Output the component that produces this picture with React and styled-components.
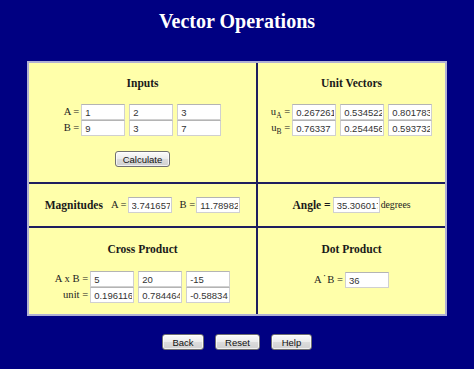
import React from 'react';
import styled, { createGlobalStyle } from 'styled-components';

const Global = createGlobalStyle`
  html, body { margin: 0; padding: 0; background: #000082; }
  body { font-family: "Liberation Serif", "Times New Roman", serif; }
`;

const Page = styled.div`
  width: 474px;
  min-height: 369px;
  padding-top: 10px;
  box-sizing: border-box;
  display: flex;
  flex-direction: column;
  align-items: center;
`;

const Title = styled.h1`
  margin: 0;
  font: bold 20px/22px "Liberation Serif", serif;
  color: #ffffff;
`;

const Board = styled.div`
  margin-top: 29px;
  width: 420px;
  box-sizing: border-box;
  border: 2px solid #b0b0d4;
  background: #1e1e5e;
  display: grid;
  grid-template-columns: 227px 187px;
  grid-template-rows: 119px 42px 86px;
  gap: 2px;
`;

const Section = styled.section`
  background: #ffffaa;
  box-sizing: border-box;
  display: flex;
  flex-direction: column;
  align-items: center;
  padding-top: ${(p) => p.$top || 0}px;
`;

const InlineSection = styled.section`
  background: #ffffaa;
  display: flex;
  align-items: center;
  justify-content: center;
`;

const Heading = styled.h2`
  margin: 0 ${(p) => p.$right || 0}px 0 0;
  font: bold 11.5px/13px "Liberation Serif", serif;
  color: #1a1a1a;
  white-space: nowrap;
`;

const VectorGrid = styled.div`
  margin-top: ${(p) => p.$gap}px;
  display: grid;
  grid-template-columns: auto auto;
  column-gap: 2px;
  align-items: center;
`;

const Label = styled.span`
  justify-self: end;
  font: ${(p) => p.$size || 10.6}px/16px "Liberation Serif", serif;
  color: #222;
  white-space: nowrap;
  margin: 0 ${(p) => p.$right || 0}px 0 ${(p) => p.$left || 0}px;
`;

const Sub = styled.sub`
  font-size: 7.5px;
  vertical-align: -3px;
  line-height: 0;
`;

const Dot = styled.span`
  display: inline-block;
  transform: translateY(-4px);
  margin: 0 1px;
`;

const Fields = styled.div`
  display: flex;
  gap: 4px;
`;

const Field = styled.input`
  width: ${(p) => p.$w || 44}px;
  height: 16px;
  box-sizing: border-box;
  margin: 0 ${(p) => p.$right || 0}px 0 0;
  border: 1px solid #d0d0d0;
  border-top-color: #b4b4b4;
  background: #ffffff;
  padding: 0 1px 0 3px;
  font: 9.5px "Liberation Sans", Arial, sans-serif;
  color: #333;
  outline: none;
`;

const PlainRow = styled.div`
  margin-top: ${(p) => p.$gap}px;
  display: flex;
  align-items: center;
  gap: 2px;
`;

const Button = styled.button`
  width: ${(p) => p.$w}px;
  height: 16px;
  margin-top: ${(p) => p.$gap || 0}px;
  padding: 0;
  border: 1px solid #707070;
  border-radius: 3px;
  background: linear-gradient(#fbfbfb, #ececec 48%, #dcdcdc 52%, #d0d0d0);
  box-shadow: inset 0 0 0 1px rgba(255, 255, 255, 0.7);
  font: 9.5px "Liberation Sans", Arial, sans-serif;
  color: #111;
  cursor: pointer;
`;

const Nav = styled.div`
  margin-top: 18px;
  display: flex;
  gap: 11px;
`;

const Vec = ({ values }) => (
  <Fields>
    {values.map((v, i) => (
      <Field key={i} defaultValue={v} />
    ))}
  </Fields>
);

export default function App() {
  return (
    <>
      <Global />
      <Page>
        <Title>Vector Operations</Title>
        <Board>
          <Section $top={14}>
            <Heading>Inputs</Heading>
            <VectorGrid $gap={14}>
              <Label>A =</Label>
              <Vec values={['1', '2', '3']} />
              <Label>B =</Label>
              <Vec values={['9', '3', '7']} />
            </VectorGrid>
            <Button $w={55} $gap={15}>Calculate</Button>
          </Section>

          <Section $top={14}>
            <Heading>Unit Vectors</Heading>
            <VectorGrid $gap={14}>
              <Label>u<Sub>A</Sub> =</Label>
              <Vec values={['0.2672612419', '0.5345224838', '0.8017837257']} />
              <Label>u<Sub>B</Sub> =</Label>
              <Vec values={['0.76337', '0.2544567', '0.5937322']} />
            </VectorGrid>
          </Section>

          <InlineSection>
            <Heading $right={8}>Magnitudes</Heading>
            <Label $right={1}>A =</Label>
            <Field defaultValue="3.7416573868" $right={8} />
            <Label $right={1}>B =</Label>
            <Field defaultValue="11.789826" />
          </InlineSection>

          <InlineSection>
            <Heading $right={2}>Angle =</Heading>
            <Field defaultValue="35.306017" $w={47} $right={1} />
            <Label $size={9.8}>degrees</Label>
          </InlineSection>

          <Section $top={15}>
            <Heading>Cross Product</Heading>
            <VectorGrid $gap={15}>
              <Label>A x B =</Label>
              <Vec values={['5', '20', '-15']} />
              <Label>unit =</Label>
              <Vec values={['0.1961161351', '0.7844645405', '-0.588348405']} />
            </VectorGrid>
          </Section>

          <Section $top={15}>
            <Heading>Dot Product</Heading>
            <PlainRow $gap={16}>
              <Label>A<Dot>·</Dot>B =</Label>
              <Field defaultValue="36" />
            </PlainRow>
          </Section>
        </Board>
        <Nav>
          <Button $w={42}>Back</Button>
          <Button $w={45}>Reset</Button>
          <Button $w={41}>Help</Button>
        </Nav>
      </Page>
    </>
  );
}
